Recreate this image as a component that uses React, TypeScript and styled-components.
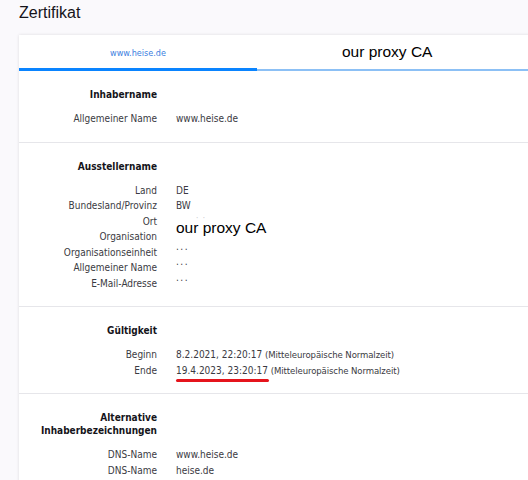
import React from "react";
import styled, { createGlobalStyle } from "styled-components";

const GlobalStyle = createGlobalStyle`
  html, body {
    margin: 0;
    background: #faf9fc;
    overflow: hidden;
  }
`;

type Row = [string, React.ReactNode];

function App() {
  const sections: { title: string; rows: Row[] }[] = [
    { title: "Inhabername", rows: [["Allgemeiner Name", "www.heise.de"]] },
    {
      title: "Ausstellername",
      rows: [
        ["Land", "DE"],
        ["Bundesland/Provinz", "BW"],
        ["Ort", <FaintDots>·  ·</FaintDots>],
        [
          "Organisation",
          <Overlay>
            <Pasted>our proxy CA</Pasted>
          </Overlay>,
        ],
        ["Organisationseinheit", <Dots>...</Dots>],
        ["Allgemeiner Name", <Dots>...</Dots>],
        ["E-Mail-Adresse", <Dots>...</Dots>],
      ],
    },
    {
      title: "Gültigkeit",
      rows: [
        [
          "Beginn",
          <>
            8.2.2021, 22:20:17 <Zone>(Mitteleuropäische Normalzeit)</Zone>
          </>,
        ],
        [
          "Ende",
          <>
            <Marked>19.4.2023, 23:20:17</Marked>{" "}
            <Zone>(Mitteleuropäische Normalzeit)</Zone>
          </>,
        ],
      ],
    },
    {
      title: "Alternative Inhaberbezeichnungen",
      rows: [
        ["DNS-Name", "www.heise.de"],
        ["DNS-Name", "heise.de"],
      ],
    },
  ];

  return (
    <Page>
      <GlobalStyle />
      <Title>Zertifikat</Title>
      <Card>
        <TabBar>
          <Tab active>www.heise.de</Tab>
          <Tab>
            <Pasted>our proxy CA</Pasted>
          </Tab>
        </TabBar>
        {sections.map((s, i) => (
          <Section key={i}>
            <Heading>{s.title}</Heading>
            {s.rows.map(([label, value], j) => (
              <React.Fragment key={j}>
                <Label>{label}</Label>
                <Value>{value}</Value>
              </React.Fragment>
            ))}
          </Section>
        ))}
      </Card>
    </Page>
  );
}

export default App;

const Page = styled.div`
  padding: 4px 0 0 19px;
  font-family: "DejaVu Sans Condensed", "DejaVu Sans", sans-serif;
  font-stretch: condensed;
  font-size: 10px;
  color: #3a3a42;
`;

const Title = styled.h1`
  margin: 0 0 13px;
  font-family: "Liberation Sans", Arial, sans-serif;
  font-weight: normal;
  font-stretch: normal;
  font-size: 16px;
  line-height: 18px;
  color: #15141a;
`;

const Card = styled.div`
  width: 560px;
  background: #fff;
  box-shadow: 0 0 3px rgba(0, 0, 0, 0.12);
`;

const TabBar = styled.div`
  display: flex;
  height: 36px;
`;

const Tab = styled.div<{ active?: boolean }>`
  box-sizing: border-box;
  width: ${(p) => (p.active ? "238px" : "auto")};
  flex: ${(p) => (p.active ? "none" : "1")};
  display: flex;
  align-items: center;
  justify-content: ${(p) => (p.active ? "center" : "flex-start")};
  padding-left: ${(p) => (p.active ? "0" : "85px")};
  padding-top: ${(p) => (p.active ? "2px" : "0")};
  font-size: 9px;
  color: #3a7ee0;
  border-bottom: ${(p) => (p.active ? "3px solid #0a84ff" : "2px solid #8cc0f5")};
`;

const Pasted = styled.span`
  font-family: "Liberation Sans", Arial, sans-serif;
  font-stretch: normal;
  font-size: 15.5px;
  color: #000;
  white-space: nowrap;
`;

const Section = styled.div`
  display: grid;
  grid-template-columns: 138px 1fr;
  column-gap: 19px;
  padding: 17px 0 15px;
  border-bottom: 1px solid #e6e6ea;
  line-height: 15.5px;
`;

const Heading = styled.div`
  grid-column: 1;
  text-align: right;
  font-weight: bold;
  color: #15141a;
  line-height: 13px;
  margin-bottom: 10px;
`;

const Label = styled.div`
  grid-column: 1;
  height: 15.5px;
  text-align: right;
  white-space: nowrap;
`;

const Value = styled.div`
  grid-column: 2;
  height: 15.5px;
  white-space: nowrap;
`;

const Zone = styled.span`
  font-size: 9.5px;
  letter-spacing: -0.1px;
`;

const Dots = styled.span`
  display: inline-block;
  letter-spacing: 1.5px;
  transform: translateY(-6px);
`;

const FaintDots = styled.span`
  display: inline-block;
  margin-left: 20px;
  color: #c8c8cc;
  font-size: 8px;
  transform: translateY(-4px);
  white-space: pre;
`;

const Overlay = styled.span`
  position: relative;
  display: block;
  height: 15.5px;

  & > span {
    position: absolute;
    left: 0;
    top: -9px;
  }
`;

const Marked = styled.span`
  position: relative;

  &::after {
    content: "";
    position: absolute;
    left: 0;
    right: -1px;
    bottom: -6px;
    height: 3px;
    border-radius: 2px;
    background: #e5141c;
  }
`;
